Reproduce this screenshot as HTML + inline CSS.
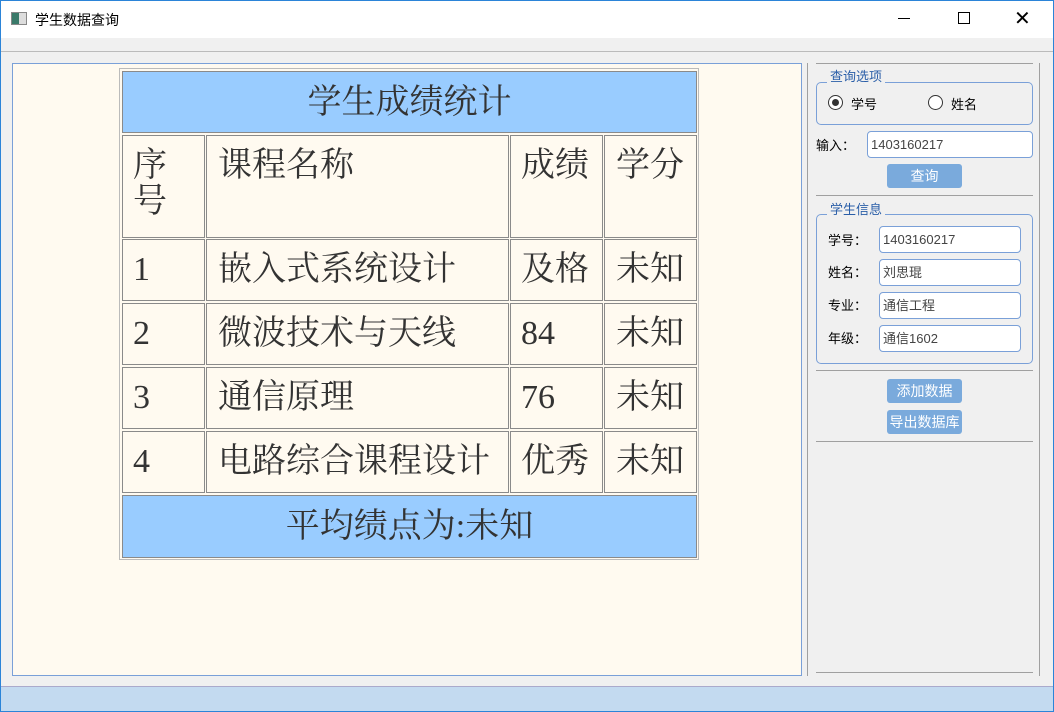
<!DOCTYPE html>
<html><head><meta charset="utf-8"><style>
*{margin:0;padding:0;box-sizing:border-box}
body{width:1054px;height:712px;background:#f0f0f0;position:relative;overflow:hidden;font-family:"Liberation Sans","Noto Sans CJK SC",sans-serif;font-size:13px;color:#000}
.a{position:absolute}
.c{position:absolute;border:1px solid #8a8a8a;background:#fffaf0;font-family:"Liberation Serif","Noto Serif CJK SC",serif;font-size:34px;color:#333;line-height:38px;white-space:nowrap}
.b{background:#99ccff}
.in{position:absolute;background:#fff;border:1px solid #7aa0d8;border-radius:4px;font-size:13px;color:#444;padding-left:3px;line-height:25px;height:27px}
.btn{position:absolute;background:#7aaadc;color:#fff;border-radius:3px;text-align:center;font-size:14px;line-height:24px;height:24px}
.lbl{position:absolute;font-size:13px}
.hr{position:absolute;height:1px;background:#a0a0a0}
.gb{position:absolute;border:1px solid #7aa0d8;border-radius:5px}
.gt{position:absolute;background:#f0f0f0;color:#2a5ea8;font-size:13px;padding:0 3px;line-height:14px}
</style></head><body>
<div class="a" style="left:0;top:0;width:1054px;height:712px;border:1px solid #2b84d8"></div>
<div class="a" style="left:1px;top:1px;width:1052px;height:37px;background:#fff"></div>
<div class="a" style="left:11px;top:12px;width:16px;height:13px;border:1px solid #888;background:linear-gradient(90deg,#3a7a6a 0 50%,#ddd 50%)"></div>
<div class="a" style="left:35px;top:10px;font-size:14px">学生数据查询</div>
<div class="a" style="left:898px;top:18px;width:12px;height:1px;background:#000"></div>
<div class="a" style="left:958px;top:12px;width:12px;height:12px;border:1px solid #000"></div>
<div class="a" style="left:1014px;top:6px;font-size:20px;font-family:'DejaVu Sans';line-height:24px">✕</div>
<div class="a" style="left:1px;top:51px;width:1052px;height:1px;background:#bbb"></div>
<div class="a" style="left:12px;top:63px;width:790px;height:613px;background:#fffaf0;border:1px solid #7aa0d8"></div>
<div class="a" style="left:119px;top:68px;width:580px;height:492px;border:1px solid #bbb"></div>
<div class="c b" style="left:122px;top:71px;width:575px;height:62px;text-align:center;line-height:62px">学生成绩统计</div>
<div class="c" style="left:122px;top:135px;width:83px;height:103px;padding:12px 0 0 10px;line-height:36px">序<br>号</div>
<div class="c" style="left:206px;top:135px;width:303px;height:103px;padding:11px 0 0 11px">课程名称</div>
<div class="c" style="left:510px;top:135px;width:93px;height:103px;padding:11px 0 0 10px">成绩</div>
<div class="c" style="left:604px;top:135px;width:93px;height:103px;padding:11px 0 0 11px">学分</div>
<div class="c" style="left:122px;top:239px;width:83px;height:62px;padding:11px 0 0 10px">1</div>
<div class="c" style="left:206px;top:239px;width:303px;height:62px;padding:11px 0 0 11px">嵌入式系统设计</div>
<div class="c" style="left:510px;top:239px;width:93px;height:62px;padding:11px 0 0 10px">及格</div>
<div class="c" style="left:604px;top:239px;width:93px;height:62px;padding:11px 0 0 11px">未知</div>
<div class="c" style="left:122px;top:303px;width:83px;height:62px;padding:11px 0 0 10px">2</div>
<div class="c" style="left:206px;top:303px;width:303px;height:62px;padding:11px 0 0 11px">微波技术与天线</div>
<div class="c" style="left:510px;top:303px;width:93px;height:62px;padding:11px 0 0 10px">84</div>
<div class="c" style="left:604px;top:303px;width:93px;height:62px;padding:11px 0 0 11px">未知</div>
<div class="c" style="left:122px;top:367px;width:83px;height:62px;padding:11px 0 0 10px">3</div>
<div class="c" style="left:206px;top:367px;width:303px;height:62px;padding:11px 0 0 11px">通信原理</div>
<div class="c" style="left:510px;top:367px;width:93px;height:62px;padding:11px 0 0 10px">76</div>
<div class="c" style="left:604px;top:367px;width:93px;height:62px;padding:11px 0 0 11px">未知</div>
<div class="c" style="left:122px;top:431px;width:83px;height:62px;padding:11px 0 0 10px">4</div>
<div class="c" style="left:206px;top:431px;width:303px;height:62px;padding:11px 0 0 11px">电路综合课程设计</div>
<div class="c" style="left:510px;top:431px;width:93px;height:62px;padding:11px 0 0 10px">优秀</div>
<div class="c" style="left:604px;top:431px;width:93px;height:62px;padding:11px 0 0 11px">未知</div>
<div class="c b" style="left:122px;top:495px;width:575px;height:63px;text-align:center;line-height:62px">平均绩点为:未知</div>

<div class="a" style="left:807px;top:63px;width:1px;height:613px;background:#a0a0a0"></div>
<div class="a" style="left:1039px;top:63px;width:1px;height:613px;background:#a0a0a0"></div>
<div class="hr" style="left:816px;top:63px;width:217px"></div>
<div class="gb" style="left:816px;top:82px;width:217px;height:43px"></div>
<div class="gt" style="left:827px;top:70px">查询选项</div>
<div class="a" style="left:828px;top:95px;width:15px;height:15px;border:1px solid #333;border-radius:50%;background:#fff"></div>
<div class="a" style="left:832px;top:99px;width:7px;height:7px;border-radius:50%;background:#333"></div>
<div class="lbl" style="left:851px;top:94px">学号</div>
<div class="a" style="left:928px;top:95px;width:15px;height:15px;border:1px solid #333;border-radius:50%;background:#fff"></div>
<div class="lbl" style="left:951px;top:94px">姓名</div>
<div class="lbl" style="left:816px;top:135px">输入：</div>
<div class="in" style="left:867px;top:131px;width:166px">1403160217</div>
<div class="btn" style="left:887px;top:164px;width:75px">查询</div>
<div class="hr" style="left:816px;top:195px;width:217px"></div>
<div class="gb" style="left:816px;top:214px;width:217px;height:150px"></div>
<div class="gt" style="left:827px;top:203px">学生信息</div>
<div class="lbl" style="left:828px;top:230px">学号：</div>
<div class="in" style="left:879px;top:226px;width:142px">1403160217</div>
<div class="lbl" style="left:828px;top:262px">姓名：</div>
<div class="in" style="left:879px;top:259px;width:142px">刘思琨</div>
<div class="lbl" style="left:828px;top:295px">专业：</div>
<div class="in" style="left:879px;top:292px;width:142px">通信工程</div>
<div class="lbl" style="left:828px;top:328px">年级：</div>
<div class="in" style="left:879px;top:325px;width:142px">通信1602</div>
<div class="hr" style="left:816px;top:370px;width:217px"></div>
<div class="btn" style="left:887px;top:379px;width:75px">添加数据</div>
<div class="btn" style="left:887px;top:410px;width:75px">导出数据库</div>
<div class="hr" style="left:816px;top:441px;width:217px"></div>
<div class="hr" style="left:816px;top:672px;width:217px"></div>
<div class="a" style="left:1px;top:686px;width:1052px;height:25px;background:#c3daf0;border-top:1px solid #aac"></div>
</body></html>
